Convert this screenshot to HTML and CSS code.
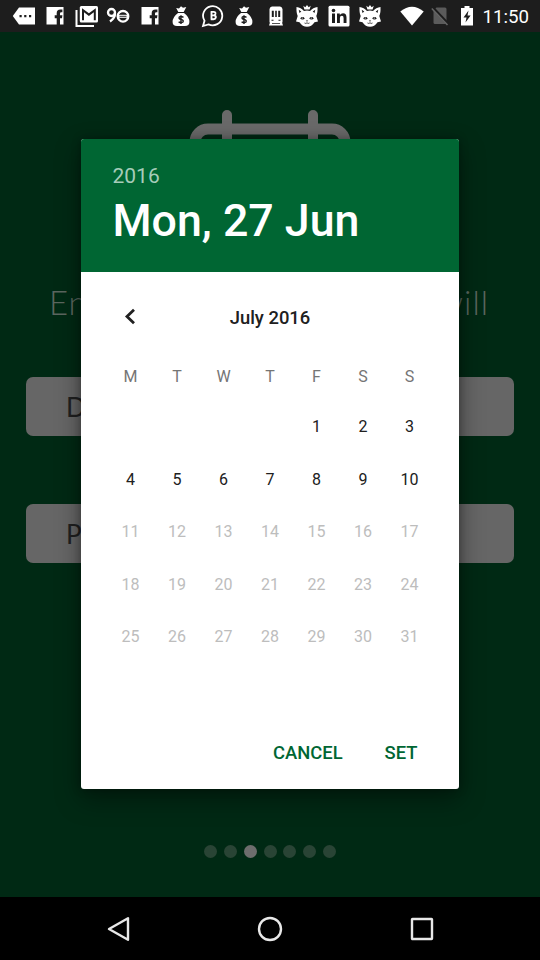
FILE: index.html
```html
<!DOCTYPE html>
<html lang="en">
<head>
<meta charset="utf-8">
<title>Select date</title>
<link rel="stylesheet" href="styles.css">
</head>
<body>
<svg class="defs" width="0" height="0">
  <symbol id="fb" viewBox="0 0 24 24"><path fill="#fff" d="M3.500 3H20.500V20.500H17V14.200H19L19.400 11.200H17V9.500Q17 8.300 18.200 8.300H19.400V5.500H17.300Q13.700 5.500 13.700 9.200V11.200H11.700V14.200H13.700V20.500H3.500Z"/></symbol>
  <symbol id="bag" viewBox="0 0 24 24">
    <path fill="#fff" d="M9.300 8 7.200 4 10 4.500 12 2.300 14 3.800 17.300 3 14.700 8ZM9 9H15Q20.400 13 20.400 18 20.400 22 16 22H8Q3.600 22 3.600 18 3.600 13 9 9Z"/>
    <path fill="none" stroke="#1d1d1d" stroke-width="1.400" d="M14.500 13.300Q12 11.700 10.300 13 9.300 14.800 12 15.400 15 16.200 14 18 12.300 19.400 9.600 17.800M12 11.300V20"/>
    <path fill="none" stroke="#1d1d1d" stroke-width=".7" d="M8.500 8.500H15.500"/>
  </symbol>
  <symbol id="fox" viewBox="0 0 24 24">
    <path fill="#fff" d="M1.500 3Q6 3.500 9 7Q12 6 15 7Q18 3.500 22.500 3 22.800 9 21.300 12L23 17.500 19.500 18.300Q16.500 22.800 12 22.800T4.500 18.300L1 17.500 2.700 12Q1.200 9 1.500 3ZM8.300 1.800 10.300 3.300 12 1 13.700 3.300 15.700 1.800 14.600 5.500H9.400Z"/>
    <path fill="#1d1d1d" d="M3.700 5.800 6.300 7.500 4.500 9ZM20.300 5.800 17.700 7.500 19.500 9ZM10.800 16.500H13.200L12 17.700Z"/>
    <ellipse cx="7.500" cy="14.200" rx="1.900" ry="1.300" fill="#1d1d1d"/><ellipse cx="16.500" cy="14.200" rx="1.900" ry="1.300" fill="#1d1d1d"/>
    <circle cx="7.300" cy="14" r=".6" fill="#fff"/><circle cx="16.300" cy="14" r=".6" fill="#fff"/>
    <path fill="none" stroke="#1d1d1d" stroke-width=".8" d="M9.500 19Q10.900 20 12 18.800 13.100 20 14.500 19"/>
  </symbol>
</svg>
<div class="screen">
  <header class="status">
    <div class="notices">
      <svg viewBox="0 0 24 24"><path fill="#fff" d="M.8 12 7 3.500H23V20.500H7Z"/><path fill="#1d1d1d" d="M7.500 11H9.700V13.200H7.500ZM12.200 11H14.400V13.200H12.200ZM17 11H19.200V13.200H17Z"/></svg>
      <svg><use href="#fb"/></svg>
      <svg viewBox="0 0 24 24"><path fill="none" stroke="#fff" stroke-width="2" d="M1.500 6V22H19"/><rect x="4.800" y="2" width="18.200" height="16.500" rx="1.500" fill="#fff"/><path fill="#1d1d1d" d="M7 4.200 13.900 9.200 20.800 4.200V16.300H18.800V8.300L13.900 12 9 8.300V16.300H7Z"/></svg>
      <svg viewBox="0 0 24 24"><g fill="none" stroke="#fff" stroke-width="2.300"><circle cx="5.500" cy="8.500" r="3.500"/><path d="M9 8.800Q9.300 14 4 17.500"/><circle cx="17" cy="12.300" r="5.300"/></g><path fill="#fff" d="M12 10.800H22V13.800H12Z"/><path stroke="#1d1d1d" stroke-width=".9" d="M13.500 12.300H20.500"/></svg>
      <svg><use href="#fb"/></svg>
      <svg><use href="#bag"/></svg>
      <svg viewBox="0 0 24 24"><path fill="none" stroke="#fff" stroke-width="1.800" d="M2 22 3.500 16.800A9.600 9.600 0 1 1 7.500 20.400Z"/><path fill="none" stroke="#fff" stroke-width="1.900" d="M10.500 7.500V15.500M9.700 7.900H12.500Q14.800 8 14.400 10 14 11.400 12.500 11.400H10.500M12.500 11.400Q15.200 11.600 14.800 13.500 14.500 15.200 12.500 15.200H9.700"/></svg>
      <svg><use href="#bag"/></svg>
      <svg viewBox="0 0 24 24"><path fill="#fff" d="M5.500 5Q6 2.500 8 2.500H16Q18 2.500 18.500 5V18.500H5.500ZM6 18.500H18L19 21.500H5Z"/><path fill="#1d1d1d" d="M7.800 6.800H9.800V13H7.800ZM11.200 6.800H12.800V13H11.200ZM14.200 6.800H16.200V13H14.200ZM7.500 15.800H9.500V16.800H7.500ZM14.500 15.800H16.500V16.800H14.500ZM8 19.300H16V20H8Z"/></svg>
      <svg><use href="#fox"/></svg>
      <svg viewBox="0 0 24 24"><rect x="1.500" y="1.800" width="21" height="20.700" rx="1.500" fill="#fff"/><circle cx="6.500" cy="6.500" r="1.800" fill="#1d1d1d"/><path fill="#1d1d1d" d="M5 9.500H8V19H5ZM10 9.500H12.800V11Q14 9.200 16 9.200 19.500 9.200 19.500 13.500V19H16.600V14Q16.600 11.700 14.900 11.700 12.900 11.700 12.900 14V19H10Z"/></svg>
      <svg><use href="#fox"/></svg>
    </div>
    <div class="system">
      <svg class="wifi" viewBox="0 0 24 20"><path fill="#fff" d="M.3 5.500Q12-4 23.700 5.500L12 19.500Z"/></svg>
      <svg class="sim" viewBox="0 0 18 20"><path fill="#5b5b5b" d="M5.500 1.500H14Q15.500 1.500 15.500 3V18H4Q2.500 18 2.500 16.500V4.500Z"/><path stroke="#1d1d1d" stroke-width="3" d="M1.500 1.500 17 18"/><path stroke="#666" stroke-width="1.500" d="M.8 2.500 16.500 19"/></svg>
      <svg class="battery" viewBox="0 0 12 20"><path fill="#fff" d="M3.500 0H8.500V2H12V19.500H0V2H3.500Z"/><path fill="#1d1d1d" d="M7.500 4.500 2.500 11.500H5.500L4.500 16.500 9.600 9.500H6.500Z"/></svg>
      <span class="clock">11:50</span>
    </div>
  </header>

  <main class="page">
    <div class="art"><svg width="162" height="60" viewBox="0 0 162 60"><g fill="none" stroke="#696969"><rect x="6" y="20" width="150" height="80" rx="13" stroke-width="11"/><path stroke-width="10" stroke-linecap="round" d="M38 6V50M124 6V50"/></g></svg></div>
    <div class="title"><span>En</span><span>will</span></div>
    <div class="field">D</div>
    <div class="field">P</div>
    <div class="dots"><i></i><i></i><i class="on"></i><i></i><i></i><i></i><i></i></div>
  </main>

  <nav class="nav">
    <svg viewBox="0 0 28 28"><path d="M24 3.200V24.800L5 14Z"/></svg>
    <svg viewBox="0 0 28 28"><circle cx="14" cy="14" r="11"/></svg>
    <svg viewBox="0 0 28 28"><rect x="4" y="4" width="20" height="20" rx=".5"/></svg>
  </nav>

  <section class="dialog">
    <div class="head">
      <div class="year">2016</div>
      <div class="date">Mon, 27 Jun</div>
    </div>
    <div class="month">
      <svg width="12" height="18" viewBox="0 0 12 18"><path fill="none" stroke="#202020" stroke-width="2.800" d="M10 1.800 3 8.500 10 15.200"/></svg>
      <span>July 2016</span>
    </div>
    <div class="grid week"><span>M</span><span>T</span><span>W</span><span>T</span><span>F</span><span>S</span><span>S</span></div>
    <div class="grid days">
      <span class="first">1</span><span>2</span><span>3</span>
      <span>4</span><span>5</span><span>6</span><span>7</span><span>8</span><span>9</span><span>10</span>
      <span class="off">11</span><span class="off">12</span><span class="off">13</span><span class="off">14</span><span class="off">15</span><span class="off">16</span><span class="off">17</span>
      <span class="off">18</span><span class="off">19</span><span class="off">20</span><span class="off">21</span><span class="off">22</span><span class="off">23</span><span class="off">24</span>
      <span class="off">25</span><span class="off">26</span><span class="off">27</span><span class="off">28</span><span class="off">29</span><span class="off">30</span><span class="off">31</span>
    </div>
    <div class="actions"><span>CANCEL</span><span>SET</span></div>
  </section>
</div>
</body>
</html>
```
FILE: styles.css
```css
* { box-sizing: border-box; }
body { margin: 0; font-family: Roboto, sans-serif; }
svg { display: block; }
.defs { position: absolute; }
.screen {
  position: relative;
  width: 540px;
  height: 960px;
  overflow: hidden;
  display: flex;
  flex-direction: column;
  background: #002914;
}
.status {
  height: 32px;
  flex: none;
  display: flex;
  align-items: center;
  padding-left: 8px;
  background: #1d1d1d;
}
.notices {
  width: 378px;
  display: grid;
  grid-template-columns: repeat(12, 31.5px);
  justify-items: center;
}
.notices svg { width: 24px; height: 24px; }
.system { display: flex; align-items: center; padding-left: 14px; }
.wifi { width: 24px; height: 20px; }
.sim { width: 18px; height: 20px; margin-left: 7px; }
.battery { width: 12px; height: 20px; margin-left: 12px; }
.clock { margin-left: 9.5px; padding-top: 1px; color: #fff; font-size: 18.7px; line-height: 32px; }

.page { height: 865px; flex: none; padding: 77px 26px 0; }
.art { height: 167px; display: flex; justify-content: center; }
.title {
  height: 52px;
  display: flex;
  justify-content: space-between;
  padding: 0 25px 0 23px;
  color: #5c665f;
  font: 300 33px/52px Lato, sans-serif;
  letter-spacing: 1px;
}
.field {
  height: 59px;
  margin-top: 68px;
  padding-left: 40px;
  border-radius: 7px;
  background: #666;
  color: #202020;
  font: 400 26px/60px Lato, sans-serif;
}
.title + .field { margin-top: 49px; }
.dots { display: flex; justify-content: center; gap: 6.7px; margin-top: 282px; }
.dots i { width: 13px; height: 13px; border-radius: 50%; background: #294435; }
.dots .on { background: #6d6d6d; }

.nav {
  height: 63px;
  flex: none;
  display: flex;
  justify-content: space-between;
  align-items: center;
  padding: 0 104px;
  background: #000;
}
.nav svg { width: 28px; height: 28px; fill: none; stroke: #e8e8e8; stroke-width: 2.4; stroke-linejoin: round; }

.dialog {
  position: absolute;
  left: 81px;
  top: 139px;
  width: 378px;
  height: 650px;
  border-radius: 3px;
  background: #fff;
  overflow: hidden;
  box-shadow: 0 10px 26px rgba(0, 0, 0, .4), 0 0 10px rgba(0, 0, 0, .3);
}
.head { height: 133px; padding: 24px 31.5px 0; background: #006633; }
.year { color: #a6ccb9; font-size: 21px; line-height: 27px; }
.date { color: #fff; font-size: 44.7px; font-weight: 500; line-height: 62px; }
.month {
  height: 90px;
  display: grid;
  grid-template-columns: 98px 1fr 98px;
  align-items: center;
  color: #202020;
  font-size: 18.4px;
  font-weight: 500;
  text-align: center;
}
.month svg { margin-left: 43px; }
.grid {
  display: grid;
  grid-template-columns: repeat(7, 46.5px);
  justify-content: center;
  text-align: center;
  font-size: 16px;
}
.week { line-height: 30px; color: #757575; }
.days { margin-top: 9px; grid-auto-rows: 52.5px; line-height: 52.5px; color: #202020; }
.days .off { color: #bdbdbd; }
.days .first { grid-column: 5; }
.actions {
  display: flex;
  justify-content: flex-end;
  gap: 42px;
  margin-top: 73px;
  padding-right: 41.5px;
  color: #006633;
  font-size: 18.4px;
  font-weight: 500;
  line-height: 32px;
}
```
